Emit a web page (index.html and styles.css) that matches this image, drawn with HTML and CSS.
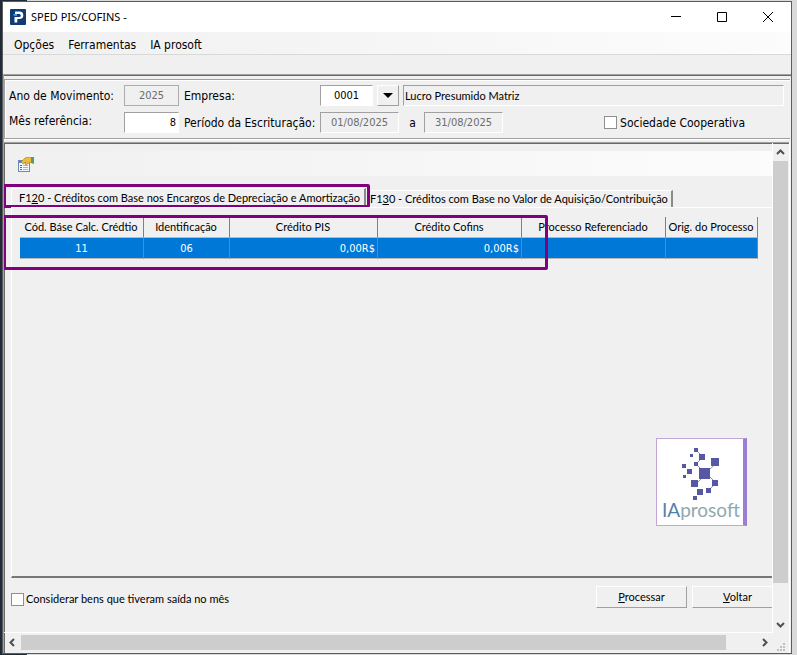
FILE: index.html
```html
<!DOCTYPE html>
<html lang="pt-BR">
<head>
  <meta charset="UTF-8">
  <meta name="viewport" content="width=device-width, initial-scale=1.0">
  <title>SPED PIS/COFINS</title>
  <link rel="stylesheet" href="styles.css">
</head>
<body>

  <div class="window">
    <header class="titlebar">
      <svg class="app-icon" viewBox="0 0 16 16">
        <rect width="16" height="16" rx="1" fill="#123a73" />
        <path d="M5 2.500h4.500a3.800 3.800 0 0 1 0 7.600H7.300V13.500H4.500V8h4.800a1.500 1.500 0 0 0 0-3H5z" fill="#fff" />
        <path d="M3 5h4v2H4z" fill="#2f9be0" />
      </svg>
      <h1>SPED PIS/COFINS -</h1>
      <div class="window-buttons">
        <button aria-label="Minimizar"><svg viewBox="0 0 10 10"><path d="M0 4.500h10" /></svg></button>
        <button aria-label="Maximizar"><svg viewBox="0 0 10 10"><path d="M.5.5h9v9h-9z" /></svg></button>
        <button aria-label="Fechar"><svg viewBox="0 0 10 10"><path d="M0 0l10 10M10 0L0 10" /></svg></button>
      </div>
    </header>

    <nav class="menu">
      <a href="#">Opções</a>
      <a href="#">Ferramentas</a>
      <a href="#">IA prosoft</a>
    </nav>

    <div class="strip"></div>

    <form class="filters">
      <div class="filters-box">
        <div class="row">
          <label class="col-label" for="ano">Ano de Movimento:</label>
          <input class="field flat off center w-year" id="ano" value="2025" disabled>
          <label class="col-label-2" for="empresa">Empresa:</label>
          <input class="field center w-code" id="empresa" value="0001">
          <button type="button" class="drop" aria-label="Escolher empresa"></button>
          <input class="field off name" aria-label="Nome da empresa" value="Lucro Presumido Matriz" readonly>
        </div>
        <div class="row">
          <label class="col-label raised" for="mes">Mês referência:</label>
          <input class="field right w-year" id="mes" value="8">
          <label class="col-label-2" for="inicio">Período da Escrituração:</label>
          <input class="field off center w-date" id="inicio" value="01/08/2025" disabled>
          <label class="until" for="fim">a</label>
          <input class="field off center w-date" id="fim" value="31/08/2025" disabled>
          <label class="check coop"><input type="checkbox"> Sociedade Cooperativa</label>
        </div>
      </div>
    </form>

    <main class="panel">
      <div class="view">
        <div class="toolbar">
          <button class="tool" aria-label="Propriedades">
            <svg viewBox="0 0 16 16">
              <rect x=".5" y="3.500" width="11" height="11" fill="#f4f8ff" stroke="#6f87b5" />
              <path d="M1 4h10v2H1z" fill="#5b86c9" />
              <path d="M2 8h2v1H2zM2 10h2v1H2zM2 12h2v1H2z" fill="#3d66ae" />
              <path d="M5 8h5v1H5zM5 10h5v1H5zM5 12h5v1H5z" fill="#9fb4d6" />
              <path d="M3 5l4-4 3-1 4 1v4l-3 1-3 2-1-1 1-2-3 2z" fill="#e9bd3c" stroke="#a87a1a" stroke-width=".6" />
              <path d="M13 0h3v7l-3-1z" fill="#5b9a62" />
            </svg>
          </button>
        </div>

        <div class="tabs">
          <button class="tab active">F1<u>2</u>0 - Créditos com Base nos Encargos de Depreciação e Amortização</button>
          <button class="tab">F1<u>3</u>0 - Créditos com Base no Valor de Aquisição/Contribuição</button>
          <div class="mark mark-tab"></div>
        </div>

        <section class="page">
          <table>
            <colgroup>
              <col class="c-base"><col class="c-ident"><col class="c-pis"><col class="c-cofins"><col class="c-proc"><col class="c-orig">
            </colgroup>
            <thead>
              <tr>
                <th>Cód. Báse Calc. Crédtio</th>
                <th>Identificação</th>
                <th>Crédito PIS</th>
                <th>Crédito Cofins</th>
                <th>Processo Referenciado</th>
                <th>Orig. do Processo</th>
              </tr>
            </thead>
            <tbody>
              <tr>
                <td>11</td>
                <td>06</td>
                <td class="money">0,00R$</td>
                <td class="money">0,00R$</td>
                <td></td>
                <td></td>
              </tr>
            </tbody>
          </table>
          <div class="mark mark-table"></div>

          <div class="logo">
            <svg viewBox="0 0 84 62">
              <g stroke="#8d8fc4" stroke-width="1" fill="none">
                <path d="M37 11l7 7-7 7 6 6M59 23l-8 7M44 38l-7 7M51 38l6 6-7 7" />
              </g>
              <g fill="#5658a3">
                <path d="M40 29h11v11H40z" />
                <path d="M52 19h8v8h-8z" />
                <path d="M40 15h6v6h-6z" />
                <path d="M35 9h4v4h-4z" />
                <path d="M35 23h4v4h-4z" />
                <path d="M31 15h3v3h-3z" />
                <path d="M23 25h4v4h-4z" />
                <path d="M28 30h5v5h-5z" />
                <path d="M24 36h3v3h-3z" />
                <path d="M32 41h7v7h-7z" />
                <path d="M53 41h6v6h-6z" />
                <path d="M47 49h5v5h-5z" />
                <path d="M38 50h6v6h-6z" />
                <path d="M34 57h4v4h-4z" />
              </g>
            </svg>
            <p><b>IA</b>prosoft</p>
          </div>
        </section>

        <footer class="actions">
          <label class="check"><input type="checkbox"> Considerar bens que tiveram saída no mês</label>
          <div class="buttons">
            <button class="push"><u>P</u>rocessar</button>
            <button class="push last"><u>V</u>oltar</button>
          </div>
        </footer>
      </div>

      <div class="scroll-y">
        <svg viewBox="0 0 9 9"><path d="M1 6l3.500-3.500L8 6" /></svg>
        <div class="thumb"></div>
        <svg viewBox="0 0 9 9"><path d="M1 3l3.500 3.500L8 3" /></svg>
      </div>

      <div class="scroll-x">
        <svg viewBox="0 0 9 9"><path d="M6 1L2.500 4.500 6 8" /></svg>
        <div class="thumb"></div>
        <svg viewBox="0 0 9 9"><path d="M3 1l3.500 3.500L3 8" /></svg>
      </div>

      <svg class="grip" viewBox="0 0 8 8">
        <path d="M6 0h2v2H6zM3 3h2v2H3zM6 3h2v2H6zM0 6h2v2H0zM3 6h2v2H3zM6 6h2v2H6z" fill="#bfbfbf" />
      </svg>
    </main>
  </div>

</body>
</html>
```
FILE: styles.css
```css
* {
  box-sizing: border-box;
}

body {
  margin: 0;
  height: 100vh;
  padding: 1px 5px 1px 2px;
  background: linear-gradient(to right, #1f2b38 27px, #dadada 27px);
  font-family: "DejaVu Sans Condensed", "DejaVu Sans", sans-serif;
  font-size: 12px;
  line-height: 16px;
  color: #000;
}

button,
input {
  font: inherit;
  color: inherit;
  margin: 0;
  padding: 0;
  border: 0;
  border-radius: 0;
  background: none;
}

.window {
  height: 100%;
  display: flex;
  flex-direction: column;
  border: 1px solid #5c5c5c;
  background-color: #f0f0f0;
}

/* title bar and menu */

.titlebar {
  display: flex;
  align-items: center;
  height: 30px;
  padding-left: 7px;
  background-color: #fff;
}

.app-icon {
  width: 16px;
  height: 16px;
}

.titlebar h1 {
  margin: 0 0 0 5px;
  font-family: "Noto Sans", sans-serif;
  font-size: 11px;
  font-weight: normal;
}

.window-buttons {
  display: flex;
  margin-left: auto;
}

.window-buttons button {
  display: flex;
  justify-content: center;
  align-items: center;
  width: 46px;
  height: 30px;
}

.window-buttons svg {
  width: 10px;
  height: 10px;
  overflow: visible;
  fill: none;
  stroke: #000;
}

.menu {
  display: flex;
  align-items: center;
  gap: 14px;
  height: 23px;
  padding: 4px 0 0 11px;
  background: linear-gradient(to right, #f0f0f0, #fcfcfc);
  border-bottom: 1px solid #d9d9d9;
}

.menu a {
  color: #000;
  text-decoration: none;
}

.strip {
  height: 19px;
}

/* filters */

.filters {
  padding: 4px 1px 3px 0;
  border-top: 1px solid #a0a0a0;
  border-left: 1px solid #a0a0a0;
  box-shadow: inset 0 1px #696969;
}

.filters-box {
  padding: 5px 4px;
  border: 1px solid #a0a0a0;
  border-right: 0;
  box-shadow: inset 1px 1px #fff, 0 1px #fff;
}

.row {
  display: flex;
  align-items: center;
}

.row + .row {
  margin-top: 6px;
}

.col-label {
  width: 115px;
}

.raised {
  padding-bottom: 4px;
}

.col-label-2 {
  width: 136px;
  margin-left: 5px;
}

.field {
  height: 21px;
  padding: 0 2px;
  font-size: 11px;
  background-color: #fff;
  border: 1px solid;
  border-color: #a0a0a0 #fff #fff #a0a0a0;
}

.off {
  background-color: #f0f0f0;
}

.off:disabled {
  color: #6d6d6d;
}

.flat {
  border-color: #adadb0;
}

.center {
  text-align: center;
}

.right {
  text-align: right;
}

.w-year {
  width: 55px;
}

.w-code {
  width: 53px;
}

.w-date {
  width: 79px;
}

.name {
  flex: 1;
  min-width: 0;
  margin-right: 2px;
  padding: 0 1px;
  font-family: Lato, sans-serif;
}

.drop {
  display: flex;
  justify-content: center;
  align-items: center;
  width: 22px;
  height: 21px;
  margin: 0 4px;
  border: 1px solid;
  border-color: #fff #a0a0a0 #a0a0a0 #fff;
}

.drop::after {
  content: "";
  border: 5px solid transparent;
  border-top-color: #000;
  border-bottom: 0;
}

.until {
  width: 25px;
  padding-left: 2px;
  text-align: center;
}

.coop {
  margin-left: auto;
  margin-right: 41px;
}

.check {
  display: flex;
  align-items: center;
  gap: 3px;
}

.check input {
  appearance: none;
  width: 13px;
  height: 13px;
  background-color: #fff;
  border: 1px solid #8f8f8f;
}

/* scrolled panel */

.panel {
  flex: 1;
  min-height: 0;
  display: grid;
  grid-template-columns: 1fr 16px;
  grid-template-rows: 1fr 18px;
  margin-right: 2px;
  padding-bottom: 2px;
  border-top: 1px solid #a0a0a0;
  border-left: 1px solid #a0a0a0;
  box-shadow: inset 1px 1px #696969, 1px 0 #fff;
}

.view {
  display: flex;
  flex-direction: column;
  min-width: 0;
  overflow: hidden;
  padding: 8px 0 0 1px;
  border-right: 1px solid #fff;
  border-bottom: 1px solid #fff;
}

.toolbar {
  height: 25px;
  padding: 6px 13px;
  background: linear-gradient(to right, #f0f0f0, #fcfcfc);
}

.tool {
  display: block;
  width: 16px;
  height: 16px;
}

.tool svg {
  display: block;
}

.tabs {
  position: relative;
  display: flex;
  align-items: flex-end;
  height: 31px;
  padding-left: 6px;
}

.tab {
  height: 17px;
  padding: 0 3px 0 4px;
  font-family: Lato, sans-serif;
  font-size: 11px;
  white-space: nowrap;
  border-top: 1px solid #fff;
  border-right: 2px solid #8a8a8a;
}

.tab.active {
  height: 19px;
  padding: 0 4px 1px 7px;
  border-left: 1px solid #fff;
  border-radius: 2px 0 0 0;
}

/* purple highlights drawn over the screen */

.mark {
  position: absolute;
  border: 3px solid #800080;
  border-radius: 2px;
  pointer-events: none;
}

.mark-tab {
  top: 8px;
  left: -2px;
  width: 367px;
  height: 24px;
}

.mark-table {
  top: 7px;
  left: -9px;
  width: 545px;
  height: 55px;
}

.page {
  position: relative;
  flex: 1;
  display: flex;
  flex-direction: column;
  margin-left: 6px;
  padding: 9px 14px 0 8px;
  border-top: 1px solid #fff;
  border-left: 1px solid #fff;
  border-bottom: 2px solid #777;
}

table {
  width: 100%;
  table-layout: fixed;
  border-collapse: separate;
  border-spacing: 0;
  font-size: 11px;
}

.c-base {
  width: 124px;
}

.c-ident {
  width: 86px;
}

.c-pis {
  width: 148px;
}

.c-cofins,
.c-proc {
  width: 144px;
}

th {
  height: 21px;
  padding: 0 1px 0 0;
  font-family: Lato, sans-serif;
  font-weight: normal;
  white-space: nowrap;
  border-right: 1px solid #808080;
  border-bottom: 1px solid #b8b8b8;
}

td {
  height: 21px;
  padding: 1px 2px 0;
  text-align: center;
  color: #fff;
  background-color: #0078d7;
  background-clip: padding-box;
  border-right: 1px solid #808080;
  border-bottom: 1px solid #b8b8b8;
}

td.money {
  text-align: right;
}

.logo {
  align-self: flex-end;
  width: 91px;
  height: 88px;
  margin: auto 11px 50px 0;
  padding-left: 2px;
  background-color: #fff;
  border: 1px solid #c3a5d6;
  border-right: 4px solid #9b7fd4;
}

.logo svg {
  display: block;
  width: 84px;
  height: 62px;
}

.logo p {
  margin: 0;
  padding-left: 3px;
  font-family: Lato, sans-serif;
  font-size: 19px;
  line-height: 18px;
  color: #8fa9ac;
}

.logo b {
  font-weight: normal;
  color: #5481ab;
}

.actions {
  display: flex;
  justify-content: space-between;
  height: 54px;
  padding: 8px 0 0 6px;
}

.actions .check {
  height: 26px;
  gap: 2px;
  font-family: Lato, sans-serif;
  font-size: 11px;
}

.buttons {
  display: flex;
  gap: 5px;
}

.push {
  width: 91px;
  height: 22px;
  font-family: Lato, sans-serif;
  font-size: 11px;
  border: 1px solid;
  border-color: #fff #a0a0a0 #a0a0a0 #fff;
}

/* the right edge of this one is cut off by the scroll area */
.push.last {
  margin-right: -11px;
}

/* scroll bars */

.scroll-y,
.scroll-x {
  display: flex;
  align-items: center;
}

.scroll-y {
  flex-direction: column;
  padding: 1px 1px 0 0;
}

.scroll-x {
  padding: 1px 0 0;
}

.scroll-y svg,
.scroll-x svg {
  flex: none;
  width: 9px;
  height: 9px;
  margin: 4px;
  fill: none;
  stroke: #505050;
  stroke-width: 2;
}

.thumb {
  background-color: #cdcdcd;
}

.scroll-y .thumb {
  width: 15px;
  flex: 1;
  margin-bottom: 33px;
}

.scroll-x .thumb {
  height: 15px;
  flex: 1;
  margin-right: 30px;
}

.grip {
  width: 8px;
  height: 8px;
  align-self: end;
  justify-self: center;
}
```
